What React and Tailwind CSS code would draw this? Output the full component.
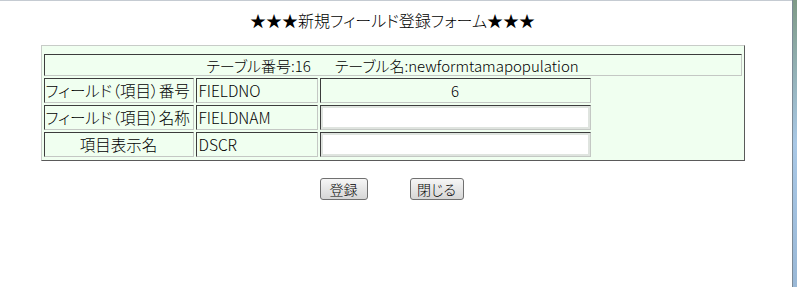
const font = { fontFamily: '"MS PGothic", "Noto Sans CJK JP", sans-serif' }

const edge = 'border border-t-[#3c3c3c] border-l-[#3c3c3c] border-r-[#c4c8c4] border-b-[#c4c8c4] bg-[#f0fff0] flex items-center leading-none whitespace-nowrap overflow-hidden'

function Row({ label, center, field, children }) {
  return (
    <div className="flex h-[25px] gap-[2px] text-[15.5px]">
      <div className={`${edge} h-full w-[150px] px-[1px] ${center ? 'justify-center' : ''}`}>{label}</div>
      <div className={`${edge} h-full w-[122px] px-[2px]`}>{field}</div>
      <div className={`${edge} h-full w-[271px] text-[15px]`}>{children}</div>
    </div>
  )
}

function TextBox() {
  return <input type="text" className="w-full h-full border-2 border-[#dfe4df] bg-white outline-none" />
}

export default function App() {
  return (
    <div className="flex h-[287px] w-[797px] bg-white text-black font-light [font-feature-settings:'palt']" style={font}>
      <div className="flex-1 border-t border-[#c5cbd2]">
        <div className="w-[785px]">
          <h1 className="mt-[9px] text-center text-[16px] leading-[20px]">★★★新規フィールド登録フォーム★★★</h1>

          <div className="mx-auto mt-[15px] w-[704px] border border-t-[#c8ccc8] border-l-[#c8ccc8] border-r-[#5a5a5a] border-b-[#5a5a5a] bg-[#f0fff0] px-[2px] pt-[8px] pb-[3px]">
            <div className="flex flex-col gap-[2px]">
              <div className={`${edge} h-[22px] justify-center text-[15px]`}>
                <span>テーブル番号:16</span>
                <span className="ml-[24px]">テーブル名:newformtamapopulation</span>
              </div>
              <Row label="フィールド（項目）番号" field="FIELDNO">
                <span className="w-full text-center">6</span>
              </Row>
              <Row label="フィールド（項目）名称" field="FIELDNAM">
                <TextBox />
              </Row>
              <Row label="項目表示名" field="DSCR" center>
                <TextBox />
              </Row>
            </div>
          </div>

          <div className="mt-[17px] flex justify-center gap-[42px] pr-[2px]">
            <button className="h-[22px] w-[48px] rounded-[3px] border border-[#707070] bg-gradient-to-b from-[#f6f6f6] to-[#d6d6d6] text-[14px] leading-none">
              登録
            </button>
            <button className="h-[22px] w-[54px] rounded-[3px] border border-[#707070] bg-gradient-to-b from-[#f6f6f6] to-[#d6d6d6] text-[14px] leading-none">
              閉じる
            </button>
          </div>
        </div>
      </div>
      <div className="w-[5px] border-l border-[#7d8a96] bg-gradient-to-b from-[#7f9a86] via-[#a9c8e6] to-[#9ab8d6]" />
    </div>
  )
}
